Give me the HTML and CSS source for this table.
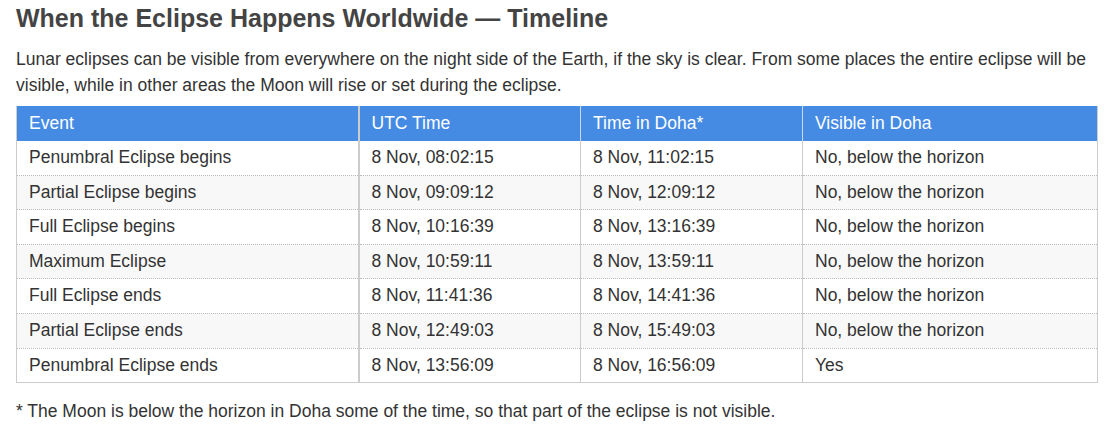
FILE: index.html
```html
<!DOCTYPE html>
<html>
<head>
<meta charset="utf-8">
<link rel="stylesheet" href="styles.css">
</head>
<body>
<div class="page">
  <h2 class="title">When the Eclipse Happens Worldwide — Timeline</h2>
  <p class="intro">Lunar eclipses can be visible from everywhere on the night side of the Earth, if the sky is clear. From some places the entire eclipse will be visible, while in other areas the Moon will rise or set during the eclipse.</p>
  <table class="timeline">
    <colgroup>
      <col class="c1"><col class="c2"><col class="c3"><col class="c4">
    </colgroup>
    <thead>
      <tr><th class="first">Event</th><th>UTC Time</th><th>Time in Doha*</th><th>Visible in Doha</th></tr>
    </thead>
    <tbody>
      <tr><td class="first">Penumbral Eclipse begins</td><td>8 Nov, 08:02:15</td><td>8 Nov, 11:02:15</td><td>No, below the horizon</td></tr>
      <tr><td class="first">Partial Eclipse begins</td><td>8 Nov, 09:09:12</td><td>8 Nov, 12:09:12</td><td>No, below the horizon</td></tr>
      <tr><td class="first">Full Eclipse begins</td><td>8 Nov, 10:16:39</td><td>8 Nov, 13:16:39</td><td>No, below the horizon</td></tr>
      <tr><td class="first">Maximum Eclipse</td><td>8 Nov, 10:59:11</td><td>8 Nov, 13:59:11</td><td>No, below the horizon</td></tr>
      <tr><td class="first">Full Eclipse ends</td><td>8 Nov, 11:41:36</td><td>8 Nov, 14:41:36</td><td>No, below the horizon</td></tr>
      <tr><td class="first">Partial Eclipse ends</td><td>8 Nov, 12:49:03</td><td>8 Nov, 15:49:03</td><td>No, below the horizon</td></tr>
      <tr><td class="first">Penumbral Eclipse ends</td><td>8 Nov, 13:56:09</td><td>8 Nov, 16:56:09</td><td>Yes</td></tr>
    </tbody>
  </table>
  <p class="note">* The Moon is below the horizon in Doha some of the time, so that part of the eclipse is not visible.</p>
</div>
</body>
</html>
```
FILE: styles.css
```css
html, body {
  margin: 0;
  padding: 0;
  background: #fff;
}
.page {
  padding: 4px 17px 0 16px;
  font-family: "Liberation Sans", Arial, sans-serif;
  color: #333;
}
.title {
  font-size: 25px;
  line-height: 28px;
  font-weight: bold;
  color: #444;
  margin: 0 0 14px 0;
}
.intro {
  font-size: 17.5px;
  line-height: 26px;
  margin: 0 0 8px 0;
}
.timeline {
  width: 100%;
  border-collapse: collapse;
  font-size: 17.5px;
  border-left: 1px solid #ccc;
  border-right: 1px solid #ccc;
  border-bottom: 1px solid #ccc;
}
.c1 { width: 342px; }
.c2 { width: 222px; }
.c3 { width: 222px; }
.timeline th {
  background: #468be3;
  color: #fff;
  font-weight: normal;
  text-align: left;
  padding: 5px 12px 5px 12px;
  line-height: 25px;
  border-left: 1px solid #c8d8ee;
}
.timeline th.first { border-left: 1px solid #ccc; }
.timeline th:nth-child(2) { border-left: 2px solid #ccc; }
.timeline td {
  padding: 4px 12px 4px 12px;
  line-height: 25.6px;
  border-left: 1px solid #ccc;
  border-top: 1px dotted #bbb;
}
.timeline td:nth-child(2) { border-left: 2px solid #ccc; }
.timeline tbody tr:first-child td { border-top: none; }
.timeline tbody tr:nth-child(even) td { background: #f8f8f8; }
.note {
  font-size: 17.5px;
  line-height: 26px;
  margin: 15px 0 0 0;
}
```
